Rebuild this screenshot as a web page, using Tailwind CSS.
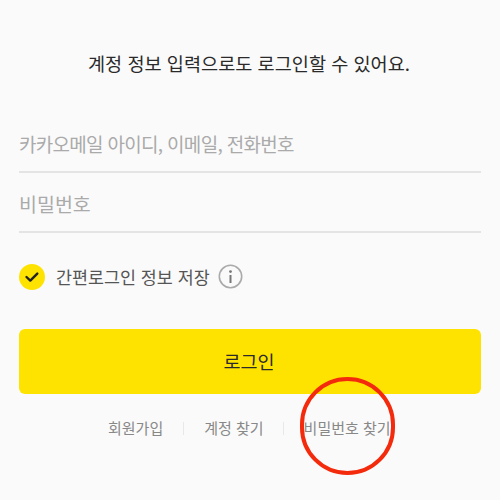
<!DOCTYPE html>
<html lang="ko">
<head>
    <meta charset="UTF-8">
    <title>로그인</title>
    <script src="https://cdn.jsdelivr.net/npm/@tailwindcss/browser@4"></script>
</head>
<body class="w-[500px] h-[500px] overflow-hidden bg-[#fafafa] font-['Noto_Sans_CJK_KR',sans-serif]">
    <main class="relative h-[500px] px-[19px] pt-[49px]">
        <h1 class="h-[28px] -translate-x-px text-center text-[18.6px] leading-[28px] font-normal text-[#2a2a2a]">계정 정보 입력으로도 로그인할 수 있어요.</h1>

        <div class="mt-[39px] h-[57px] border-b-2 border-[#e4e4e4] pt-[13px] text-[19px] leading-[30px] tracking-[-0.7px] text-[#aaaaaa]">카카오메일 아이디, 이메일, 전화번호</div>
        <div class="h-[60px] border-b-2 border-[#e4e4e4] pt-[16px] text-[19.5px] leading-[30px] text-[#aaaaaa]">비밀번호</div>

        <div class="mt-[30px] flex h-[27px] items-center">
            <span class="flex h-[26px] w-[26px] items-center justify-center rounded-full bg-[#ffe300]">
                <svg width="16" height="12" viewBox="0 0 16 12" fill="none" stroke="#222222" stroke-width="2.4" stroke-linecap="round" stroke-linejoin="round"><path d="M2.5 6l3.8 3.6 7-7"/></svg>
            </span>
            <span class="ml-[11px] text-[17.4px] leading-[24px] text-[#555555]">간편로그인 정보 저장</span>
            <svg class="ml-[8px]" width="25" height="25" viewBox="0 0 25 25" fill="none"><circle cx="12.5" cy="12.5" r="11.2" stroke="#aaaaaa" stroke-width="1.6"/><circle cx="12.5" cy="7.6" r="1.4" fill="#777777"/><path d="M12.5 11v8" stroke="#777777" stroke-width="2"/></svg>
        </div>

        <button class="mt-[39px] block h-[65px] w-full rounded-[6px] bg-[#ffe300] pr-[2px] text-[18.5px] text-[#2a2a2a]">로그인</button>

        <nav class="mt-[23px] flex h-[22px] items-center text-[15px] leading-[22px] text-[#888888]">
            <a class="ml-[89px]">회원가입</a>
            <span class="ml-[20px] h-[13px] w-px bg-[#e8e8e8]"></span>
            <a class="ml-[20px]">계정 찾기</a>
            <span class="ml-[19px] h-[13px] w-px bg-[#e8e8e8]"></span>
            <a class="ml-[20px]">비밀번호 찾기</a>
        </nav>

        <!-- red annotation circle over the link -->
        <div class="absolute left-[300px] top-[377px] h-[98px] w-[95px] rounded-full border-[4px] border-[#f42a0c]"></div>
    </main>
</body>
</html>
